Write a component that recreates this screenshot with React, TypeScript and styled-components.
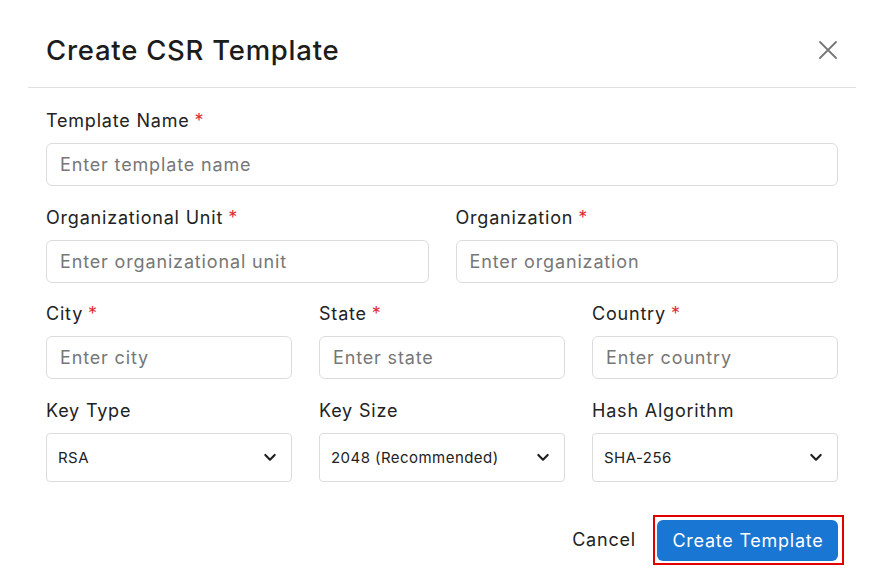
import React, {FC} from 'react';
import styled, {createGlobalStyle} from "styled-components";

const GlobalStyle = createGlobalStyle`
  * {
    box-sizing: border-box;
  }

  body {
    margin: 0;
    background: #ffffff;
    font-family: Inter, "Noto Sans", sans-serif;
    color: #222222;
  }
`

const Dialog = styled.div`
  width: 887px;
  height: 572px;
  background: #ffffff;
  overflow: hidden;
`
const Header = styled.header`
  display: flex;
  align-items: center;
  justify-content: space-between;
  height: 88px;
  margin: 0 31px 0 28px;
  padding: 12px 17px 0 18px;
  border-bottom: 1px solid #e0e0e0;
`
const Title = styled.h1`
  margin: 0;
  font-size: 27.5px;
  font-weight: 500;
  color: #1c1c1c;
  letter-spacing: 0.75px;
`
const CloseButton = styled.button`
  width: 22px;
  height: 22px;
  padding: 0;
  border: none;
  background: none;
  display: flex;
  align-items: center;
  justify-content: center;
  cursor: pointer;
`
const Body = styled.div`
  display: flex;
  flex-direction: column;
  gap: 18.5px;
  padding: 20px 49px 0 46px;
`
const Row = styled.div<{ $cols: number }>`
  display: grid;
  grid-template-columns: repeat(${p => p.$cols}, 1fr);
  column-gap: 27px;
`
const Field = styled.div`
  display: flex;
  flex-direction: column;
`
const Label = styled.label`
  font-size: 18px;
  line-height: 26px;
  letter-spacing: 0.8px;
  margin-bottom: 9px;
  color: #222222;

  span {
    color: #e0303a;
    margin-left: 5px;
  }
`
const Input = styled.input`
  height: 43px;
  width: 100%;
  padding: 0 13px;
  border: 1px solid #dcdcdc;
  border-radius: 6px;
  font-family: inherit;
  font-size: 18px;
  letter-spacing: 0.85px;
  color: #222222;
  outline: none;

  &::placeholder {
    color: #777777;
  }
`
const SelectWrap = styled.div`
  position: relative;

  svg {
    position: absolute;
    right: 14px;
    top: 50%;
    transform: translateY(-50%);
    pointer-events: none;
  }
`
const Select = styled.select`
  appearance: none;
  height: 49px;
  width: 100%;
  padding: 0 11px;
  border: 1px solid #dcdcdc;
  border-radius: 4px;
  background: #ffffff;
  font-family: inherit;
  font-size: 15px;
  letter-spacing: 0.45px;
  color: #222222;
  outline: none;
`
const Footer = styled.footer`
  display: flex;
  align-items: center;
  justify-content: flex-end;
  gap: 17px;
  padding: 33px 43px 0 46px;
`
const TextButton = styled.button`
  border: none;
  background: none;
  padding: 0;
  font-family: inherit;
  font-size: 18px;
  letter-spacing: 0.8px;
  color: #222222;
  cursor: pointer;
`
const Highlight = styled.div`
  padding: 3px 4px 2px 2px;
  border: 2px solid #e00000;
  display: flex;
`
const PrimaryButton = styled.button`
  height: 41px;
  width: 181px;
  padding: 0 0 0 1px;
  border: none;
  border-radius: 6px;
  background: #1976d2;
  color: #ffffff;
  font-family: inherit;
  font-size: 18px;
  letter-spacing: 0.75px;
  cursor: pointer;
`

const Chevron: FC = () => (
  <svg width="16" height="16" viewBox="0 0 24 24" fill="none" stroke="#1e1e1e" strokeWidth="3.2" strokeLinecap="round" strokeLinejoin="round">
    <path d="M5 9l7 7 7-7"/>
  </svg>
)

interface TextFieldProps {
  label: string,
  placeholder: string,
  required?: boolean,
}

const TextField: FC<TextFieldProps> = ({label, placeholder, required}) => (
  <Field>
    <Label>{label}{required && <span>*</span>}</Label>
    <Input placeholder={placeholder}/>
  </Field>
)

interface SelectFieldProps {
  label: string,
  options: string[],
}

const SelectField: FC<SelectFieldProps> = ({label, options}) => (
  <Field>
    <Label>{label}</Label>
    <SelectWrap>
      <Select defaultValue={options[0]}>
        {options.map(o => <option key={o}>{o}</option>)}
      </Select>
      <Chevron/>
    </SelectWrap>
  </Field>
)

const App: FC = () => {
  return (
    <Dialog>
      <GlobalStyle/>
      <Header>
        <Title>Create CSR Template</Title>
        <CloseButton aria-label="Close">
          <svg width="20" height="20" viewBox="0 0 20 20" stroke="#777777" strokeWidth="1.8" strokeLinecap="round">
            <path d="M2 2l16 16M18 2L2 18"/>
          </svg>
        </CloseButton>
      </Header>
      <Body>
        <Row $cols={1}>
          <TextField label="Template Name" placeholder="Enter template name" required/>
        </Row>
        <Row $cols={2}>
          <TextField label="Organizational Unit" placeholder="Enter organizational unit" required/>
          <TextField label="Organization" placeholder="Enter organization" required/>
        </Row>
        <Row $cols={3}>
          <TextField label="City" placeholder="Enter city" required/>
          <TextField label="State" placeholder="Enter state" required/>
          <TextField label="Country" placeholder="Enter country" required/>
        </Row>
        <Row $cols={3}>
          <SelectField label="Key Type" options={["RSA", "EC"]}/>
          <SelectField label="Key Size" options={["2048 (Recommended)", "3072", "4096"]}/>
          <SelectField label="Hash Algorithm" options={["SHA-256", "SHA-384", "SHA-512"]}/>
        </Row>
      </Body>
      <Footer>
        <TextButton>Cancel</TextButton>
        <Highlight>
          <PrimaryButton>Create Template</PrimaryButton>
        </Highlight>
      </Footer>
    </Dialog>
  );
};

export default App;
